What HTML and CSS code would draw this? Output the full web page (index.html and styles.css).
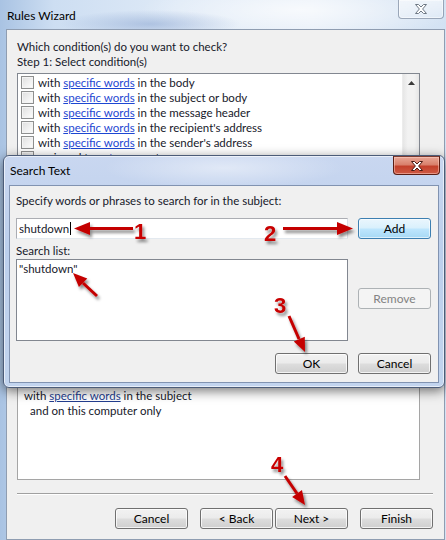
FILE: index.html
```html
<!DOCTYPE html>
<html>
<head>
<meta charset="utf-8">
<title>Rules Wizard</title>
<link rel="stylesheet" href="styles.css">
</head>
<body>
<div class="wizard">
  <div class="w-title">
    <span class="title">Rules Wizard</span>
    <div class="close close-inactive">
      <svg width="14" height="12" viewBox="0 0 14 12"><path d="M1.5,1.5 H4.5 L7,4 L9.5,1.5 H12.5 L8.6,6 L12.5,10.5 H9.5 L7,8 L4.5,10.5 H1.5 L5.4,6 Z" fill="#fff" stroke="#6e7884" stroke-width="1" stroke-linejoin="round"/></svg>
    </div>
  </div>
  <div class="w-client">
    <div class="lbl">Which condition(s) do you want to check?</div>
    <div class="lbl">Step 1: Select condition(s)</div>
    <div class="condlist">
      <div class="rows">
        <div class="row"><span class="cb"></span><span>with <span class="link">specific words</span> in the body</span></div>
        <div class="row"><span class="cb"></span><span>with <span class="link">specific words</span> in the subject or body</span></div>
        <div class="row"><span class="cb"></span><span>with <span class="link">specific words</span> in the message header</span></div>
        <div class="row"><span class="cb"></span><span>with <span class="link">specific words</span> in the recipient's address</span></div>
        <div class="row"><span class="cb"></span><span>with <span class="link">specific words</span> in the sender's address</span></div>
        <div class="row"><span class="cb"></span><span>assigned to <span class="link">category</span> category</span></div>
        <div class="row"><span class="cb"></span><span>which is an Out of Office message</span></div>
        <div class="row"><span class="cb"></span><span>which has an attachment</span></div>
      </div>
      <div class="vscroll">
        <div class="up"><svg width="7" height="4" viewBox="0 0 7 4"><path d="M0,4 L3.5,0 L7,4 Z" fill="#3a3a3a"/></svg></div>
      </div>
    </div>
    <div class="lbl step2">Step 2: Edit the rule description (click an underlined value)</div>
    <div class="desc">
      <div class="line">Apply this rule after the message arrives</div>
      <div class="line">with <span class="link2">specific words</span> in the subject</div>
      <div class="line indent">and on this computer only</div>
    </div>
    <div class="sep"></div>
    <div class="btnrow">
      <button class="btn">Cancel</button>
      <button class="btn gap-wide">&lt; Back</button>
      <button class="btn gap-narrow">Next &gt;</button>
      <button class="btn gap-wide">Finish</button>
    </div>
  </div>
</div>

<div class="dialog">
  <div class="d-title">
    <span class="title">Search Text</span>
    <div class="close close-red">
      <svg width="14" height="12" viewBox="0 0 14 12"><path d="M1.5,1.5 H4.5 L7,4 L9.5,1.5 H12.5 L8.6,6 L12.5,10.5 H9.5 L7,8 L4.5,10.5 H1.5 L5.4,6 Z" fill="#fff" stroke="#4a1a12" stroke-width="1" stroke-linejoin="round"/></svg>
    </div>
  </div>
  <div class="d-client">
    <div class="lbl span2">Specify words or phrases to search for in the subject:</div>
    <div class="textbox"><span class="caret">shutdown</span></div>
    <button class="btn btn-default row2">Add</button>
    <div class="lbl span2 list-lbl">Search list:</div>
    <div class="searchlist"><div class="item">"shutdown"</div></div>
    <button class="btn btn-disabled remove">Remove</button>
    <button class="btn ok">OK</button>
    <button class="btn cancel2">Cancel</button>
  </div>
</div>

<svg class="annot" width="446" height="540" viewBox="0 0 446 540">
  <defs>
    <filter id="sh" x="-40%" y="-40%" width="180%" height="180%">
      <feDropShadow dx="2" dy="3" stdDeviation="1.6" flood-color="#000" flood-opacity="0.45"/>
    </filter>
  </defs>
  <g filter="url(#sh)" class="arrows">
    <line x1="133" y1="228.5" x2="88" y2="228.5"/>
    <polygon points="74,228.5 90,222 90,235"/>
    <line x1="283" y1="228.5" x2="340" y2="228.5"/>
    <polygon points="353,228.5 337,222 337,235"/>
    <line x1="97" y1="296" x2="83" y2="283"/>
    <polygon points="73,273 87.3,278.4 78.9,287"/>
    <line x1="289" y1="316" x2="299" y2="339"/>
    <polygon points="305,352 304.8,336.8 293.8,341.6"/>
    <line x1="285" y1="476" x2="297" y2="493.5"/>
    <polygon points="305,505 302,490.1 292.1,496.9"/>
  </g>
  <g filter="url(#sh)" class="nums">
    <text x="134" y="239">1</text>
    <text x="264" y="241">2</text>
    <text x="274" y="313">3</text>
    <text x="271" y="472">4</text>
  </g>
</svg>
</body>
</html>
```

FILE: styles.css
```css
* { box-sizing: border-box; }
html, body { margin: 0; padding: 0; }
body {
  width: 446px;
  height: 540px;
  overflow: hidden;
  position: relative;
  font-family: Lato, "Noto Sans", sans-serif;
  font-size: 11.5px;
  color: #16182a;
  background:
    radial-gradient(ellipse 90px 14px at 150px 24px, rgba(120,150,200,0.45), rgba(120,150,200,0)),
    radial-gradient(ellipse 160px 30px at 300px 10px, rgba(255,255,255,0.7), rgba(255,255,255,0)),
    linear-gradient(90deg, #a9c3e3 0%, #cddef2 12%, #dfeaf7 40%, #e6eef8 70%, #d3e2f3 100%);
}

.wizard { display: flex; flex-direction: column; height: 540px; }
.w-title {
  height: 29px;
  display: flex;
  justify-content: space-between;
  align-items: flex-start;
  padding: 0 2px 0 7px;
  flex: none;
}
.title { line-height: 15px; margin-top: 8px; color: #000; white-space: nowrap; font-size: 12px; }

.close { display: flex; align-items: center; justify-content: center; }
.close-inactive {
  width: 46px;
  height: 20px;
  margin-top: -1px;
  border: 1px solid rgba(86,104,132,0.55);
  border-radius: 0 0 4px 4px;
  background: linear-gradient(rgba(255,255,255,0.55), rgba(255,255,255,0.2));
  box-shadow: inset 0 0 0 1px rgba(255,255,255,0.5);
}

.w-client {
  flex: 1;
  margin: 0 1px 0 6px;
  border: 1px solid #8f9db1;
  background: #f0f0f0;
  padding: 9px 11px 10px 10px;
  display: flex;
  flex-direction: column;
  min-height: 0;
}
.lbl { line-height: 15px; white-space: nowrap; }

.condlist {
  margin: 4px 13px 0 0;
  height: 265px;
  flex: none;
  border: 1px solid #828790;
  background: #fff;
  display: flex;
  overflow: hidden;
}
.rows { flex: 1; padding: 1px 0 0 3px; }
.row { height: 15px; display: flex; align-items: center; gap: 4px; white-space: nowrap; }
.cb {
  width: 13px;
  height: 13px;
  flex: none;
  border: 1px solid #8e8f8f;
  background: linear-gradient(135deg, #dedede, #ffffff);
  box-shadow: inset 0 0 0 1px #f4f4f4;
}
.link { color: #1d47d2; text-decoration: underline; }
.link2 { color: #233d8f; text-decoration: underline; }

.vscroll {
  width: 17px;
  flex: none;
  background: linear-gradient(90deg, #e6e6e6, #f2f2f2 30%, #f2f2f2 70%, #e6e6e6);
  border-left: 1px solid #ececec;
}
.vscroll .up { height: 17px; display: flex; align-items: center; justify-content: center; }

.step2 { margin-top: 7px; }
.desc {
  flex: 1;
  margin: 10px 13px 0 0;
  border: 1px solid #a5a5a5;
  background: #fff;
  padding: 2px 6px;
  overflow: hidden;
}
.desc .line { line-height: 15px; white-space: nowrap; }
.desc .indent { padding-left: 6px; }

.sep {
  height: 2px;
  flex: none;
  border-top: 1px solid #a0a0a0;
  border-bottom: 1px solid #ffffff;
  margin: 13px 0;
}
.btnrow { display: flex; justify-content: flex-end; flex: none; }

.btn {
  font: inherit;
  font-size: 12px;
  color: #000;
  width: 73px;
  height: 21px;
  padding: 0;
  line-height: 19px;
  text-align: center;
  border: 1px solid #707070;
  border-radius: 3px;
  background: linear-gradient(#f2f2f2 0%, #ebebeb 48%, #dddddd 52%, #cfcfcf 100%);
  box-shadow: inset 0 0 0 1px rgba(255,255,255,0.75);
}
.gap-wide { margin-left: 12px; }
.gap-narrow { margin-left: 2px; }
.btn-default {
  border-color: #3c7fb1;
  background: linear-gradient(#eaf6fd 0%, #d9f0fc 48%, #bee6fd 52%, #a7d9f5 100%);
  box-shadow: inset 0 0 0 1px rgba(255,255,255,0.6);
}
.btn-disabled {
  border-color: #adb2b5;
  background: #f4f4f4;
  color: #838383;
  box-shadow: none;
}

/* Search Text dialog (window over the wizard) */
.dialog {
  position: absolute;
  left: 3px;
  top: 155px;
  width: 442px;
  height: 233px;
  border: 1px solid #4c5c78;
  border-radius: 6px;
  background:
    radial-gradient(ellipse 120px 20px at 220px 12px, rgba(255,255,255,0.45), rgba(255,255,255,0)),
    linear-gradient(180deg, #c9d7f0 0%, #bccfec 40%, #c2d4ee 100%);
  box-shadow: 0 3px 12px rgba(0,0,0,0.55), inset 0 0 0 1px rgba(255,255,255,0.6);
  display: flex;
  flex-direction: column;
}
.d-title {
  height: 29px;
  flex: none;
  display: flex;
  align-items: flex-start;
  justify-content: space-between;
  padding: 0 4px 0 6px;
}
.d-title .title { margin-top: 7px; }
.close-red {
  width: 47px;
  height: 19px;
  margin-top: 0;
  border: 1px solid #5a1d13;
  border-top-color: #7a3a30;
  border-radius: 0 0 4px 4px;
  background: linear-gradient(#e9a796 0%, #d9806c 45%, #c3402b 55%, #cf5a44 100%);
  box-shadow: inset 0 0 0 1px rgba(255,210,200,0.5);
}

.d-client {
  flex: 1;
  margin: 0 5px 4px 5px;
  border: 1px solid #8193b1;
  background: #f0f0f0;
  padding: 7px 7px 8px 6px;
  display: grid;
  grid-template-columns: 332px 73px;
  column-gap: 10px;
  align-content: start;
}
.span2 { grid-column: 1 / -1; }
.textbox {
  margin-top: 10px;
  height: 21px;
  border: 1px solid #abadb3;
  border-right-color: #dbdfe6;
  border-bottom-color: #e3e9ef;
  background: #fff;
  padding: 0 2px;
  line-height: 19px;
}
.caret { border-right: 1px solid #000; padding-right: 1px; }
.row2 { margin-top: 10px; }
.list-lbl { margin-top: 4px; }
.searchlist {
  margin-top: 1px;
  height: 82px;
  border: 1px solid #828790;
  background: #fff;
  padding: 1px 2px;
}
.searchlist .item { line-height: 15px; }
.remove { margin-top: 30px; align-self: start; }
.ok { justify-self: end; margin-top: 12px; }
.cancel2 { margin-top: 12px; }

/* annotation overlay */
.annot { position: absolute; left: 0; top: 0; pointer-events: none; }
.arrows line { stroke: #c40000; stroke-width: 3; }
.arrows polygon { fill: #c40000; }
.nums text {
  font-family: "Liberation Sans", Arial, sans-serif;
  font-weight: bold;
  font-size: 22px;
  fill: #c80000;
}
```
